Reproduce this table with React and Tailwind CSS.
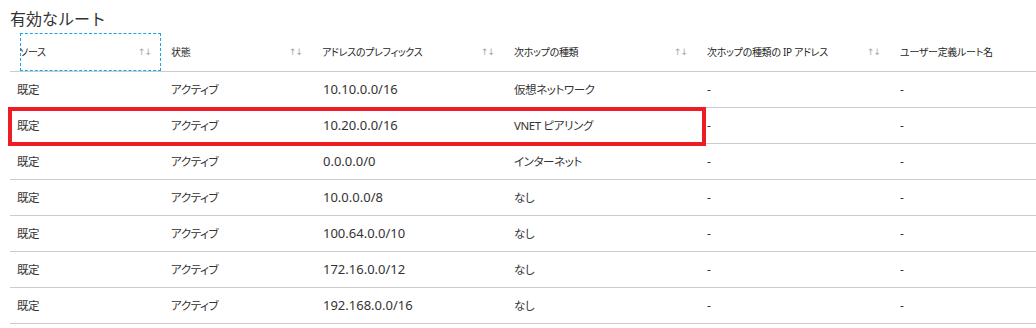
import React from "react";

const JA = "font-['Noto_Sans','Noto_Sans_CJK_JP',sans-serif] [font-feature-settings:'palt']";

const rows = [
  ["10.10.0.0/16", "仮想ネットワーク"],
  ["10.20.0.0/16", "VNET ピアリング"],
  ["0.0.0.0/0", "インターネット"],
  ["10.0.0.0/8", "なし"],
  ["100.64.0.0/10", "なし"],
  ["172.16.0.0/12", "なし"],
  ["192.168.0.0/16", "なし"],
];

const cols = "grid grid-cols-[154px_151px_192px_193px_193px_1fr]";

function Arrows() {
  return (
    <span className="text-[9px] leading-none tracking-[-1px] text-[#a6a6a6] font-['DejaVu_Sans',sans-serif]">
      ↑↓
    </span>
  );
}

function HeadCell({ label, sort = true }) {
  return (
    <div className="flex items-center justify-between pl-[7px] pr-[13px]">
      <span className={`${JA} text-[10px] tracking-[-0.3px] text-[#262626]`}>{label}</span>
      {sort && <Arrows />}
    </div>
  );
}

export default function App() {
  return (
    <div className="w-[1036px] h-[328px] bg-white overflow-hidden text-[#333]">
      <div className="h-[33px] pt-[4px] pl-[10px] leading-[28px] text-[16px] text-[#333] font-['Noto_Sans_CJK_JP',sans-serif]">
        有効なルート
      </div>
      <div className="ml-[10px]">
        <div className={`${cols} h-[39px] border-b border-[#cccccc]`}>
          <div>
            <div className="ml-[10px] w-[141px] h-[38px] border border-dashed border-[#1aa3e8] flex items-center justify-between pr-[9px]">
              <span className={`${JA} text-[10px] tracking-[-0.3px] text-[#262626] -ml-[1px]`}>ソース</span>
              <Arrows />
            </div>
          </div>
          <HeadCell label="状態" />
          <HeadCell label="アドレスのプレフィックス" />
          <HeadCell label="次ホップの種類" />
          <HeadCell label="次ホップの種類の IP アドレス" />
          <HeadCell label="ユーザー定義ルート名" sort={false} />
        </div>
        {rows.map(([addr, hop], i) => (
          <div key={i} className={`${cols} relative h-[36px] border-b border-[#cccccc] items-center`}>
            <div className={`${JA} pl-[7px] text-[11.5px] tracking-[-0.4px]`}>既定</div>
            <div className={`${JA} pl-[7px] text-[11.5px] tracking-[-0.4px]`}>アクティブ</div>
            <div className="pl-[8px] text-[13px] font-['Noto_Sans',sans-serif]">{addr}</div>
            <div className={`${JA} pl-[7px] text-[11.5px] tracking-[-0.4px]`}>{hop}</div>
            <div className="pl-[7px] text-[12px] font-['Noto_Sans',sans-serif]">-</div>
            <div className="pl-[7px] text-[12px] font-['Noto_Sans',sans-serif]">-</div>
            {i === 1 && (
              <div className="absolute -left-[2px] -top-[1px] w-[698px] h-[39px] border-4 border-[#ee1c25] pointer-events-none" />
            )}
          </div>
        ))}
      </div>
    </div>
  );
}
